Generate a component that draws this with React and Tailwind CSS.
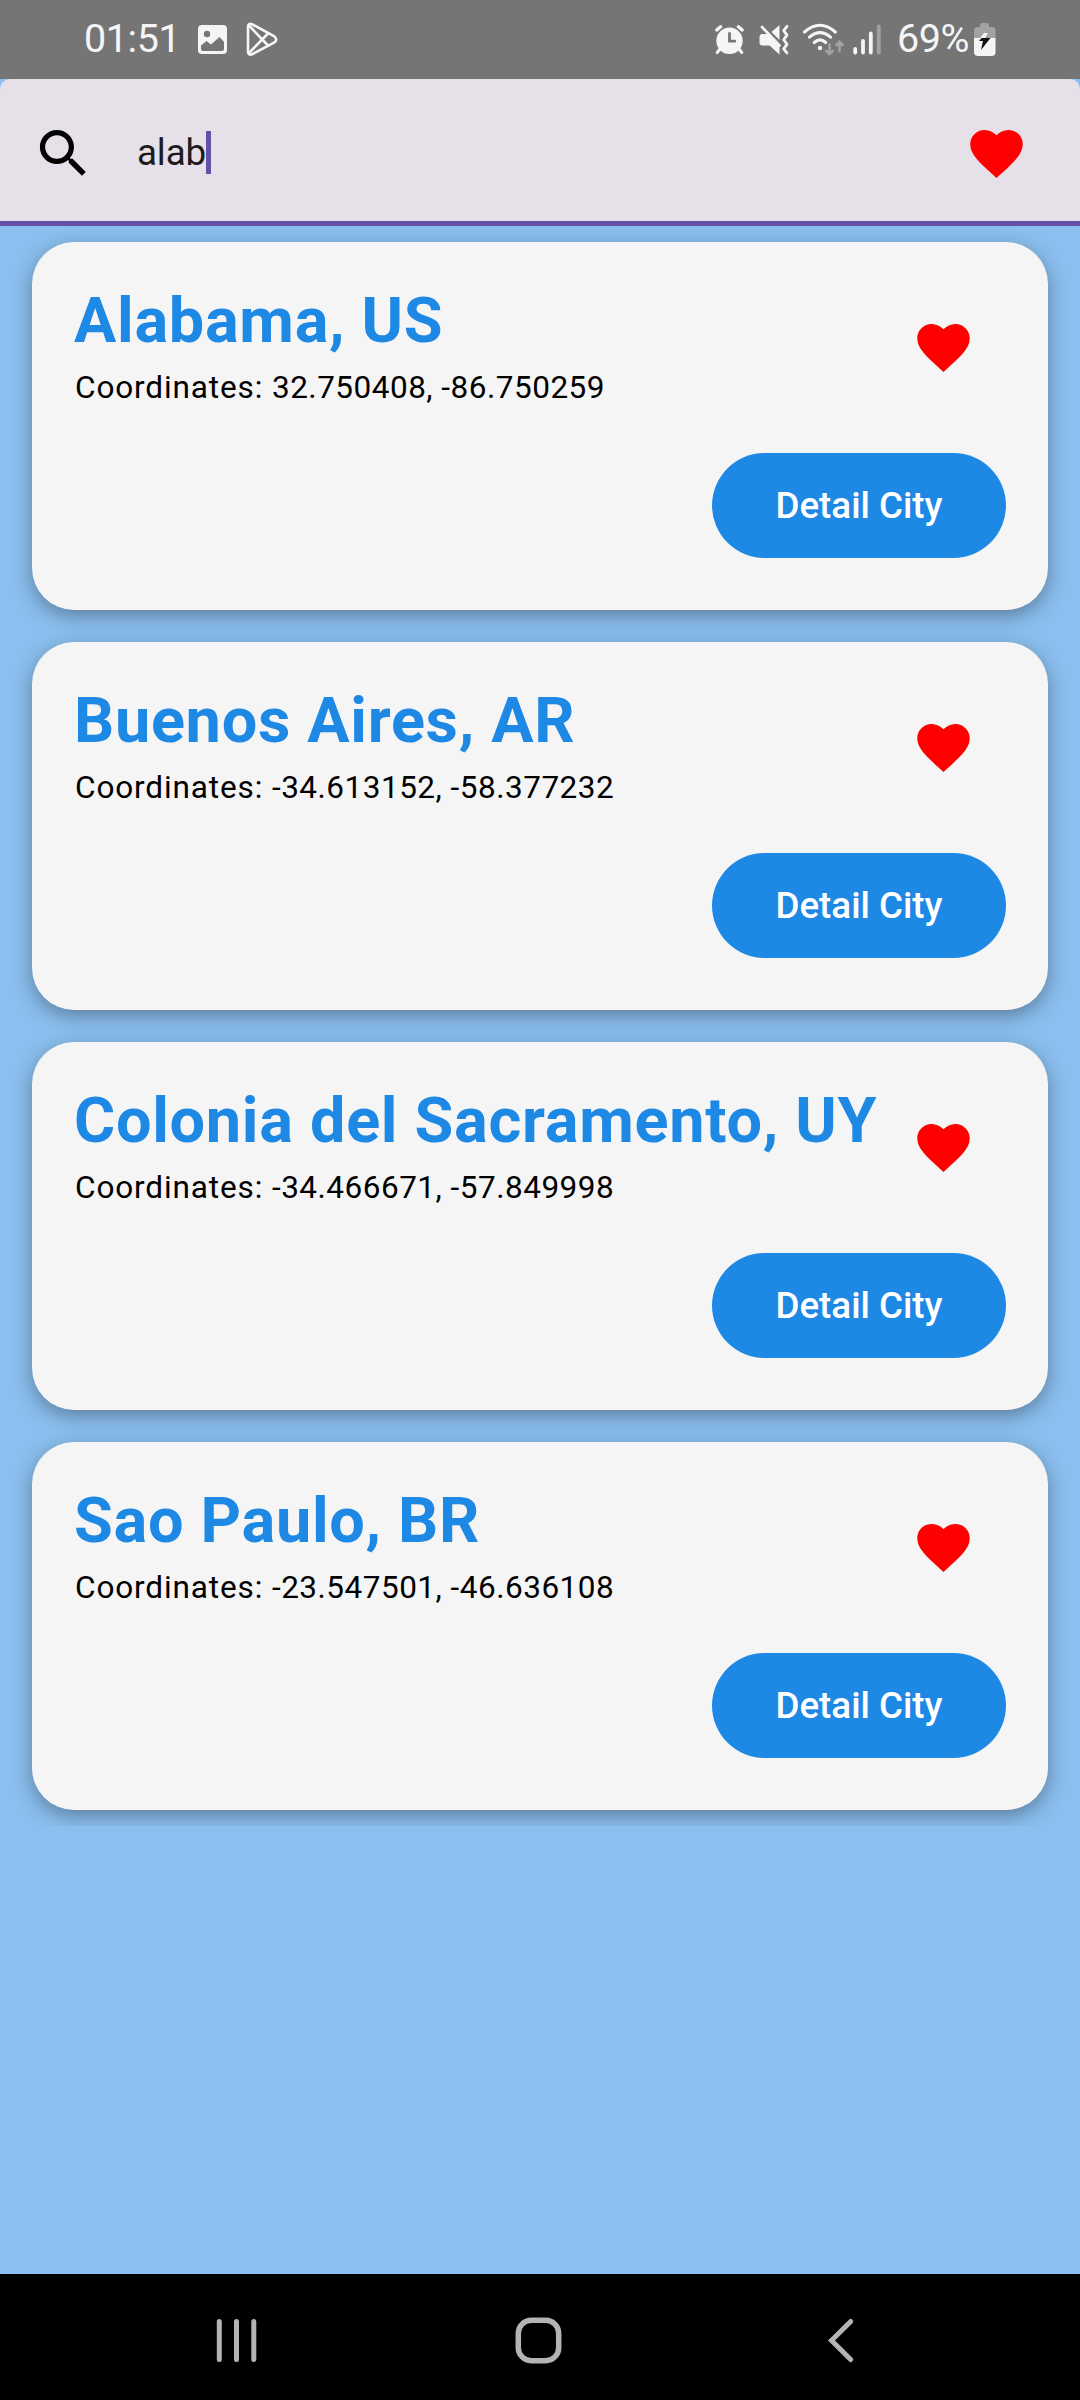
import React from "react";

const cities = [
  { name: "Alabama, US", coordinates: "32.750408, -86.750259" },
  { name: "Buenos Aires, AR", coordinates: "-34.613152, -58.377232" },
  { name: "Colonia del Sacramento, UY", coordinates: "-34.466671, -57.849998" },
  { name: "Sao Paulo, BR", coordinates: "-23.547501, -46.636108" },
];

function Heart() {
  return (
    <svg className="size-[63px] shrink-0" viewBox="0 0 24 24" fill="#ff0000">
      <path d="M12 21.35l-1.45-1.32C5.4 15.36 2 12.28 2 8.5 2 5.42 4.42 3 7.5 3c1.74 0 3.41.81 4.5 2.09C13.09 3.81 14.76 3 16.5 3 19.58 3 22 5.42 22 8.5c0 3.78-3.4 6.86-8.55 11.54L12 21.35z" />
    </svg>
  );
}

function StatusBar() {
  return (
    <div className="flex h-[79px] items-start bg-[#757575] text-[#f5f5f5]">
      <span className="ml-[84px] mt-[17px] w-[114px] whitespace-nowrap text-[39.5px] leading-[44px] tracking-[-0.4px]">01:51</span>
      <svg className="mt-[25px] h-[29px] w-[29px]" viewBox="0 0 29 29">
        <rect width="29" height="29" rx="4" fill="#f5f5f5" />
        <circle cx="9" cy="9" r="3.2" fill="#757575" />
        <path d="M3 20.5l5.5-4.6 4.5 3.6 8.5-7.5 4.5 5V24q0 2-2 2H5q-2 0-2-2z" fill="#757575" />
      </svg>
      <svg className="ml-[19px] mt-[21px] h-[36px] w-[32px]" viewBox="0 0 32 36" fill="none" stroke="#f5f5f5" strokeWidth="2.6" strokeLinejoin="round" strokeLinecap="round">
        <path d="M2 6Q2 1.500 6.500 3.500L28 15.200Q32.500 18.500 28 21.700L6.500 33Q2 35 2 30.500z" />
        <path d="M3 4.500L22 24.500M3 32L22 12.500" />
      </svg>

      <svg className="ml-[436px] mt-[24px] h-[31px] w-[31px]" viewBox="0 0 31 31">
        <g stroke="#f5f5f5" strokeLinecap="round" fill="none">
          <path d="M2.800 6l3.800-3.200M28.200 6l-3.800-3.200" strokeWidth="3.400" />
          <path d="M6 25l-2.800 3.500M25 25l2.800 3.500" strokeWidth="3" />
        </g>
        <circle cx="15.500" cy="16.800" r="13.200" fill="#f5f5f5" />
        <path d="M15.500 9.500v7.700h5.200" fill="none" stroke="#757575" strokeWidth="2.800" strokeLinecap="round" />
      </svg>
      <svg className="ml-[14px] mt-[24px] h-[31px] w-[31px]" viewBox="0 0 31 31">
        <path d="M3.500 10H9L20.500 21.500V30.500L10.500 21.500H3.500Q.5 21.500.5 18.500V13Q.5 10 3.500 10z" fill="#f5f5f5" />
        <path d="M12.500 8L20.500 1V16z" fill="#f5f5f5" />
        <path d="M3 3L20.500 21.500" stroke="#f5f5f5" strokeWidth="2.600" strokeLinecap="round" />
        <path d="M28 2.300l-3.300 4.300 3.300 4.500-3.300 4.600 3.300 4.600-3.300 4.500 3.300 4.200" fill="none" stroke="#f5f5f5" strokeWidth="2.800" strokeLinecap="round" strokeLinejoin="round" />
      </svg>
      <svg className="ml-[12px] mt-[23px] h-[33px] w-[43px]" viewBox="0 0 43 33" fill="none" stroke="#f5f5f5" strokeWidth="3.100" strokeLinecap="round">
        <path d="M2.500 9Q18-4.500 33.300 9M7.500 14.200Q18 5 28.500 14.200M12.300 19.500Q18 14.300 23.700 19.500" />
        <circle cx="18" cy="25" r="2.200" fill="#f5f5f5" stroke="none" />
        <path d="M27.500 21.500v9M24.300 27.800l3.200 3.200 3.200-3.200M37.500 28v-8.500M34.300 22l3.200-3.200 3.200 3.200" stroke="#a2a2a2" strokeWidth="2.600" />
      </svg>
      <svg className="ml-[8px] mt-[24px] h-[31px] w-[30px]" viewBox="0 0 30 31" fill="none" stroke="#f5f5f5" strokeWidth="3.800" strokeLinecap="round">
        <path d="M2.200 25v3.500M10 17v11.500M17.800 9.500v19" />
        <path d="M25.800 2.500v26" stroke="#a2a2a2" />
      </svg>
      <span className="ml-[14px] mt-[17px] w-[77px] whitespace-nowrap text-[39.5px] leading-[44px] tracking-[-0.4px]">69%</span>
      <svg className="mt-[23px] h-[33px] w-[22px]" viewBox="0 0 22 33">
        <path d="M6 2.500Q6 0 8 0h5q2 0 2 2.500V4h3q3.500 0 3.500 3.500V16H0V7.500Q0 4 3.500 4H6z" fill="#a2a2a2" />
        <path d="M0 15h21.500v14q0 4-4 4H4q-4 0-4-4z" fill="#f5f5f5" />
        <path d="M12 10L5 18h4L7 27l9.500-12h-5l2-5z" fill="#111" />
        <path d="M10 10h4l-2.500 5H6z" fill="#f5f5f5" />
      </svg>
    </div>
  );
}

function SearchBar() {
  return (
    <div className="flex h-[147px] items-start rounded-t-[10px] border-b-[5px] border-[#6650a4] bg-[#e6e0e9]">
      <svg className="ml-[32px] mt-[43px] size-[63px]" viewBox="0 0 24 24" fill="#000">
        <path d="M15.500 14h-.79l-.28-.27C15.410 12.590 16 11.110 16 9.500 16 5.910 13.090 3 9.500 3S3 5.910 3 9.500 5.910 16 9.500 16c1.610 0 3.090-.59 4.230-1.570l.27.28v.79l5 4.990L20.490 19l-4.990-5zm-6 0C7.010 14 5 11.990 5 9.500S7.010 5 9.500 5 14 7.010 14 9.500 11.990 14 9.500 14z" />
      </svg>
      <div className="ml-[42px] mt-[52px] flex flex-1 items-start">
        <span className="w-[69px] whitespace-nowrap text-[36.750px] leading-[43px] tracking-[-0.150px] text-[#1d1b20]">alab</span>
        <span className="h-[43px] w-[5px] bg-[#6650a4]" />
      </div>
      <div className="mr-[52px] mt-[43px]">
        <Heart />
      </div>
    </div>
  );
}

function CityCard({ city }) {
  return (
    <article className="flex h-[368px] flex-col rounded-[42px] bg-[#f5f5f5] px-[42px] shadow-[0_6px_20px_rgba(0,0,0,0.34)]">
      <div className="flex h-[211px] items-start justify-between">
        <div className="pt-[42px]">
          <h2 className="whitespace-nowrap text-[63px] font-bold leading-[74px] tracking-[0.700px] text-[#1e88e5]">{city.name}</h2>
          <p className="ml-px mt-[10px] whitespace-nowrap text-[31.500px] leading-[40px] tracking-[0.880px] text-black">
            Coordinates: <span className="tracking-[0.500px]">{city.coordinates}</span>
          </p>
        </div>
        <div className="mr-[31px] mt-[74px]">
          <Heart />
        </div>
      </div>
      <button className="h-[105px] w-[294px] self-end rounded-full bg-[#1e88e5] text-[36.750px] font-medium leading-[53px] tracking-[0] text-white">
        Detail City
      </button>
    </article>
  );
}

function NavigationBar() {
  return (
    <nav className="flex h-[126px] items-start bg-black pt-[43px]">
      <svg className="ml-[214px] h-[48px] w-[45px]" viewBox="0 0 45 48" stroke="#b4b4b4" strokeWidth="5" strokeLinecap="round">
        <path d="M5.300 4.500v38M22.500 4.500v38M39.800 4.500v38" />
      </svg>
      <svg className="ml-[254px] h-[50px] w-[50px]" viewBox="0 0 50 50" fill="none" stroke="#b4b4b4" strokeWidth="5.500">
        <rect x="5.300" y="3.300" width="40.400" height="40.400" rx="13" />
      </svg>
      <svg className="ml-[263px] h-[48px] w-[30px]" viewBox="0 0 30 48" fill="none" stroke="#b4b4b4" strokeWidth="5" strokeLinecap="round">
        <path d="M24.700 4.500L5.500 23.500l19.200 19" />
      </svg>
    </nav>
  );
}

export default function App() {
  return (
    <div className="flex h-[2400px] w-[1080px] flex-col overflow-hidden bg-[#8bbfef] font-['Roboto',sans-serif]">
      <StatusBar />
      <SearchBar />
      <main className="flex-1">
        <div className="flex flex-col gap-[32px] overflow-hidden px-[32px] py-[16px]">
          {cities.map((city) => (
            <CityCard key={city.name} city={city} />
          ))}
        </div>
      </main>
      <NavigationBar />
    </div>
  );
}
